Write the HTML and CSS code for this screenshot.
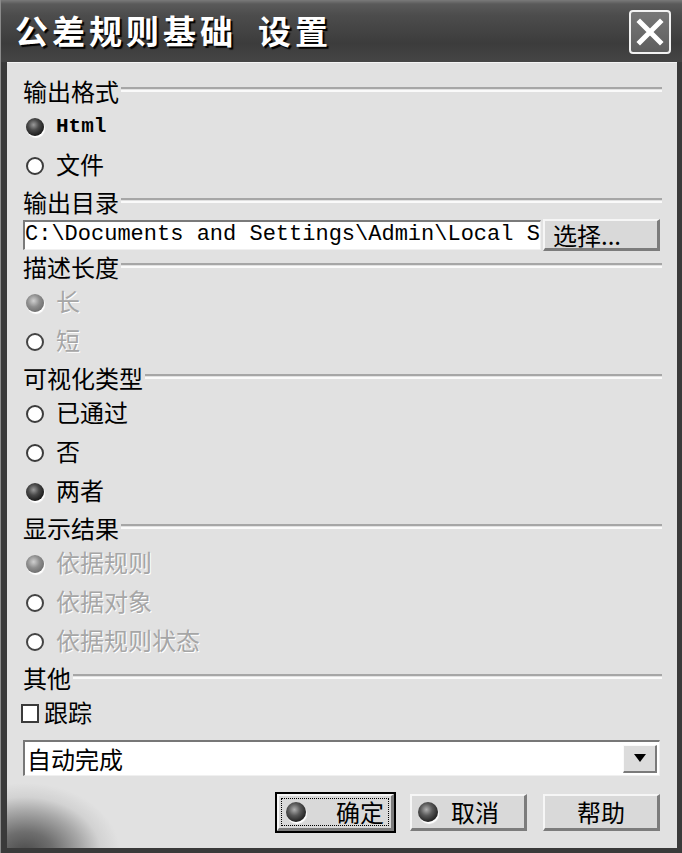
FILE: index.html
```html
<!DOCTYPE html>
<html lang="zh">
<head>
<meta charset="utf-8">
<title>公差规则基础 设置</title>
<link rel="stylesheet" href="styles.css">
</head>
<body>
<div class="window">
  <div class="titlebar">
    <div class="title"><span>公差规则基础</span><span class="title-b">设置</span></div>
    <div class="close">
      <svg width="30" height="30" viewBox="0 0 30 30"><path d="M5 5 L25 25 M25 5 L5 25" stroke="#fff" stroke-width="5" stroke-linecap="square"/></svg>
    </div>
  </div>
  <div class="content">
    <div class="hdr"><span>输出格式</span></div>
    <div class="row"><span class="radio on"></span><span class="txt mono">Html</span></div>
    <div class="row"><span class="radio"></span><span class="txt">文件</span></div>
    <div class="hdr"><span>输出目录</span></div>
    <div class="path-row">
      <div class="path">C:\Documents and Settings\Admin\Local S</div>
      <div class="btn pick">选择...</div>
    </div>
    <div class="hdr"><span>描述长度</span></div>
    <div class="row dis"><span class="radio on"></span><span class="txt">长</span></div>
    <div class="row dis"><span class="radio"></span><span class="txt">短</span></div>
    <div class="hdr"><span>可视化类型</span></div>
    <div class="row"><span class="radio"></span><span class="txt">已通过</span></div>
    <div class="row"><span class="radio"></span><span class="txt">否</span></div>
    <div class="row"><span class="radio on"></span><span class="txt">两者</span></div>
    <div class="hdr"><span>显示结果</span></div>
    <div class="row dis"><span class="radio on"></span><span class="txt">依据规则</span></div>
    <div class="row dis"><span class="radio"></span><span class="txt">依据对象</span></div>
    <div class="row dis"><span class="radio"></span><span class="txt">依据规则状态</span></div>
    <div class="hdr"><span>其他</span></div>
    <div class="row chk-row"><span class="check"></span><span class="txt">跟踪</span></div>
    <div class="combo">
      <span class="combo-text">自动完成</span>
      <span class="combo-arrow"><svg width="12" height="8" viewBox="0 0 12 8"><path d="M0 0 H12 L6 8 Z" fill="#000"/></svg></span>
    </div>
    <div class="actions">
      <div class="btn act default"><span class="focus"><span class="ball"></span><span class="lbl">确定</span></span></div>
      <div class="btn act"><span class="ball"></span><span class="lbl">取消</span></div>
      <div class="btn act"><span class="lbl solo">帮助</span></div>
    </div>
  </div>
</div>
</body>
</html>
```

FILE: styles.css
```css
html, body {
  margin: 0;
  padding: 0;
  background: #3a3a3a;
}
body {
  width: 682px;
  height: 853px;
  overflow: hidden;
  font-family: "Noto Sans CJK SC", "Noto Sans", sans-serif;
}
.window {
  width: 682px;
  height: 853px;
  box-sizing: border-box;
  background: #3a3a3a;
  padding: 0 5px 5px 6px;
  display: flex;
  flex-direction: column;
  border-left: 1px solid #8a8a8a;
}
.titlebar {
  height: 62px;
  box-sizing: border-box;
  flex: none;
  display: flex;
  align-items: center;
  justify-content: space-between;
  background: linear-gradient(#7a7a7a 0, #5a5a5a 4px, #4c4c4c 25%, #3c3c3c 70%, #454545 100%);
  margin: 0 -5px 0 -6px;
  padding-left: 14px;
  padding-right: 11px;
}
.title {
  color: #fff;
  font-size: 33px;
  font-weight: bold;
  letter-spacing: 4px;
  text-shadow: 2px 2px 1px #000;
  line-height: 1;
  margin-top: -2px;
}
.title-b {
  margin-left: 21px;
}
.close {
  width: 42px;
  height: 44px;
  box-sizing: border-box;
  border: 2px solid #f2f2f2;
  border-radius: 4px;
  background: linear-gradient(#777, #5e5e5e);
  display: flex;
  align-items: center;
  justify-content: center;
  margin-top: 2px;
}
.content {
  flex: 1;
  background-color: #e1e1e1;
  background-image: radial-gradient(ellipse 95px 70px at 18px 790px, #4a4a4a 0, #6e6e6e 30%, #a8a8a8 60%, #d2d2d2 80%, rgba(225,225,225,0) 100%);
  padding: 11px 17px 0 16px;
  display: flex;
  flex-direction: column;
  font-size: 24px;
  color: #000;
  border-top: 1px solid #f4f4f4;
}
.hdr {
  height: 33px;
  display: flex;
  align-items: center;
  margin-right: -2px;
}
.hdr span {
  line-height: 1;
}
.hdr::after {
  content: "";
  flex: 1;
  height: 1px;
  border-top: 2px solid #a6a6a6;
  border-bottom: 2px solid #fafafa;
  margin-left: 2px;
  margin-top: -2px;
}
.row {
  height: 39px;
  display: flex;
  align-items: center;
  padding-left: 3px;
  gap: 12px;
  line-height: 1;
}
.txt {
  margin-top: -4px;
}
.mono {
  font-family: "Liberation Mono", "DejaVu Sans Mono", monospace;
  font-size: 21px;
  font-weight: bold;
  margin-top: 0;
}
.radio {
  width: 18px;
  height: 18px;
  box-sizing: border-box;
  border-radius: 50%;
  border: 2px solid #3c3c3c;
  background: #fff;
  flex: none;
}
.radio.on {
  border: none;
  background: radial-gradient(circle at 42% 38%, #9a9a9a 0, #4a4a4a 35%, #1e1e1e 70%, #111 100%);
  box-shadow: 1px 2px 1px #fff;
}
.dis {
  color: #a6a6a6;
  text-shadow: 1px 1px 0 #fff;
}
.dis .radio {
  border-color: #444;
}
.dis .radio.on {
  background: radial-gradient(circle at 42% 38%, #d0d0d0 0, #8e8e8e 40%, #6a6a6a 80%, #777 100%);
}
.path-row {
  height: 32px;
  display: flex;
  align-items: flex-start;
  padding-top: 2px;
  box-sizing: border-box;
}
.path {
  flex: 1;
  height: 30px;
  box-sizing: border-box;
  background: #fff;
  border-top: 2px solid #7a7a7a;
  border-left: 2px solid #7a7a7a;
  border-bottom: 1px solid #f0f0f0;
  border-right: 1px solid #f0f0f0;
  font-family: "Liberation Mono", "DejaVu Sans Mono", monospace;
  font-size: 22px;
  line-height: 26px;
  padding-left: 0;
  white-space: nowrap;
  overflow: hidden;
}
.btn {
  box-sizing: border-box;
  background: #d9d9d9;
  border-top: 2px solid #f6f6f6;
  border-left: 2px solid #f6f6f6;
  border-right: 3px solid #7c7c7c;
  border-bottom: 3px solid #7c7c7c;
  display: flex;
  align-items: center;
  justify-content: center;
  line-height: 1;
  font-size: 24px;
}
.pick {
  width: 117px;
  height: 32px;
  margin-left: 2px;
  margin-top: -1px;
  justify-content: flex-start;
  padding-left: 8px;
}
.chk-row {
  padding-left: 0;
  margin-left: -2px;
  gap: 5px;
}
.check {
  width: 18px;
  height: 19px;
  box-sizing: border-box;
  border: 2px solid #3a3a3a;
  background: #fff;
  flex: none;
}
.combo {
  margin-top: 7px;
  height: 36px;
  box-sizing: border-box;
  background: #fff;
  border-top: 2px solid #777;
  border-left: 2px solid #777;
  border-right: 1px solid #f0f0f0;
  border-bottom: 1px solid #f0f0f0;
  display: flex;
  align-items: center;
  justify-content: space-between;
  padding-left: 2px;
  padding-right: 2px;
}
.combo-text {
  line-height: 1;
}
.combo-arrow {
  width: 34px;
  height: 28px;
  box-sizing: border-box;
  background: #dcdcdc;
  border-top: 1px solid #fafafa;
  border-left: 1px solid #fafafa;
  border-right: 2px solid #7a7a7a;
  border-bottom: 2px solid #7a7a7a;
  display: flex;
  align-items: center;
  justify-content: center;
}
.actions {
  margin-top: 18px;
  display: flex;
  justify-content: flex-end;
  gap: 16px;
}
.act {
  width: 117px;
  height: 37px;
  justify-content: flex-start;
  padding-left: 6px;
}
.act .ball {
  width: 20px;
  height: 20px;
  border-radius: 50%;
  background: radial-gradient(circle at 42% 38%, #b0b0b0 0, #5a5a5a 35%, #262626 70%, #1a1a1a 100%);
  box-shadow: 1px 2px 1px #fff;
  flex: none;
}
.act .lbl {
  margin-left: 13px;
}
.act .lbl.solo {
  margin-left: 0;
}
.act:last-child {
  justify-content: center;
  padding-left: 0;
}
.default {
  outline: 2px solid #000;
  outline-offset: 0;
  padding: 2px;
}
.focus {
  flex: 1;
  height: 100%;
  box-sizing: border-box;
  border: 1px dotted #000;
  display: flex;
  align-items: center;
  padding-left: 4px;
}
.default .lbl {
  margin-left: 30px;
}
```
